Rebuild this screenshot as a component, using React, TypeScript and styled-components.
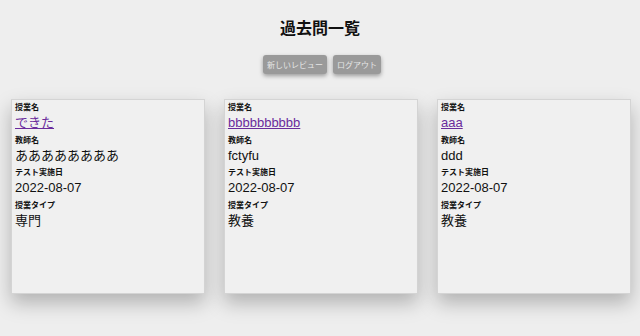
import React from 'react';
import styled, { createGlobalStyle } from 'styled-components';

const GlobalStyle = createGlobalStyle`
  html, body {
    margin: 0;
    padding: 0;
    background: #eeeeee;
    font-family: "Liberation Sans", "Noto Sans CJK JP", sans-serif;
    color: #111;
  }
`;

const Page = styled.div`
  width: 640px;
  height: 336px;
  overflow: hidden;
  display: flex;
  flex-direction: column;
  align-items: center;
`;

const Title = styled.h1`
  margin: 17px 0 0;
  font-size: 16px;
  line-height: 20px;
  font-weight: bold;
  font-family: "Noto Sans CJK JP", sans-serif;
`;

const Toolbar = styled.div`
  display: flex;
  gap: 6px;
  margin-top: 18px;
  margin-left: 4px;
`;

const Button = styled.button`
  height: 19px;
  padding: 0 4px;
  border: none;
  border-radius: 3px;
  background: #9a9a9a;
  color: #e6e6e6;
  font-family: "Noto Sans CJK JP", sans-serif;
  font-size: 8px;
  box-shadow: 0 2px 4px rgba(0, 0, 0, 0.35);
`;

const CardRow = styled.div`
  align-self: stretch;
  display: flex;
  gap: 19px;
  padding-left: 11px;
  margin-top: 25px;
`;

const Card = styled.div`
  width: 194px;
  height: 195px;
  box-sizing: border-box;
  border: 1px solid #d4d4d4;
  background: #f0f0f0;
  padding: 1px 3px;
  box-shadow: 0 9px 18px rgba(0, 0, 0, 0.25);
`;

const Label = styled.div`
  font-family: "Noto Sans CJK JP", sans-serif;
  font-size: 8px;
  line-height: 12px;
  font-weight: bold;
`;

const Value = styled.div`
  font-size: 13px;
  line-height: 20px;
  margin-bottom: 0.5px;
`;

const Link = styled.a`
  color: #6a2b9c;
  text-decoration: underline;
`;

type Review = { name: string; teacher: string; date: string; type: string };

const reviews: Review[] = [
  { name: 'できた', teacher: 'ああああああああ', date: '2022-08-07', type: '専門' },
  { name: 'bbbbbbbbbb', teacher: 'fctyfu', date: '2022-08-07', type: '教養' },
  { name: 'aaa', teacher: 'ddd', date: '2022-08-07', type: '教養' },
];

export default function App() {
  return (
    <Page>
      <GlobalStyle />
      <Title>過去問一覧</Title>
      <Toolbar>
        <Button>新しいレビュー</Button>
        <Button>ログアウト</Button>
      </Toolbar>
      <CardRow>
        {reviews.map((r, i) => (
          <Card key={i}>
            <Label>授業名</Label>
            <Value>
              <Link href="#">{r.name}</Link>
            </Value>
            <Label>教師名</Label>
            <Value>{r.teacher}</Value>
            <Label>テスト実施日</Label>
            <Value>{r.date}</Value>
            <Label>授業タイプ</Label>
            <Value>{r.type}</Value>
          </Card>
        ))}
      </CardRow>
    </Page>
  );
}
